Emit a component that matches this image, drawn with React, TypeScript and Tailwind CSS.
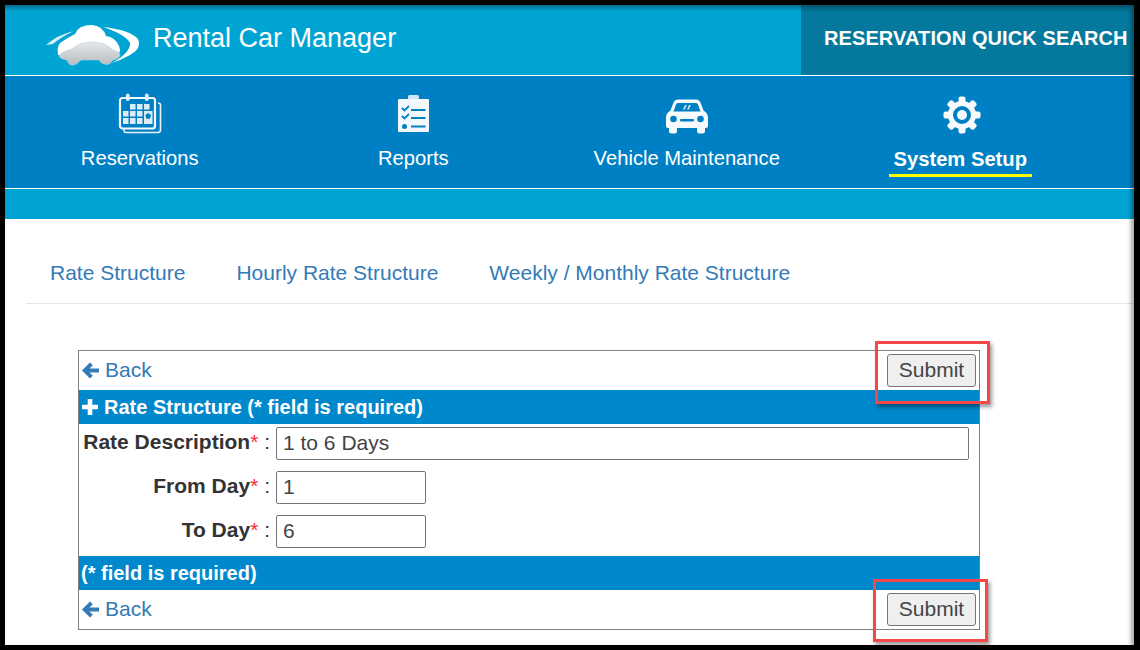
import React from 'react';

const CalendarIcon = () => (
  <svg width="44" height="41" viewBox="0 0 44 41" fill="none">
    <path d="M6 35V37.500Q6 39.500 8 39.500H40Q42.500 39.500 42.500 37V12Q42.500 10 40 10" stroke="#e6f3fa" strokeWidth="1.600" />
    <rect x="2" y="5" width="35" height="30.500" rx="2.500" stroke="#f2f8fc" strokeWidth="2.200" />
    <rect x="8" y="0.500" width="3.600" height="7.500" rx="1.800" fill="#e6f3fa" />
    <rect x="27" y="0.500" width="3.600" height="7.500" rx="1.800" fill="#e6f3fa" />
    <path fill="#dcecf6" d="M12 11h5.500v5.500H12zM19 11h5.500v5.500H19zM26 11h5.500v5.500H26zM5 18h5.500v5.500H5zM12 18h5.500v5.500H12zM19 18h5.500v5.500H19zM5 25h5.500v6H5zM12 25h5.500v6H12zM19 25h5.500v6H19zM26 18h8.500v13H26z" />
    <path fill="#0080c4" d="M30.200 20l2.900 2.100-1.100 3.700h-3.600l-1.100-3.700z" />
  </svg>
);

const ClipboardIcon = () => (
  <svg width="31" height="37" viewBox="0 0 31 37">
    <rect x="10" y="0" width="11" height="4.500" rx="1.500" fill="#cfe6f3" />
    <rect x="0" y="4" width="31" height="33" rx="1" fill="#f2f8fc" />
    <g stroke="#0080c4" fill="none" strokeWidth="2">
      <path d="M4 13l2.500 2.500L11 11M4 21l2.500 2.500L11 19" strokeWidth="1.800" />
      <path d="M13 15h14.500M13 23h14.500M13 31.500h14.500" />
    </g>
    <circle cx="6.500" cy="31.500" r="2.500" fill="#0080c4" />
  </svg>
);

const CarIcon = () => (
  <svg width="44" height="35" viewBox="0 0 44 35">
    <path fill="#f6fafd" fillRule="evenodd" d="M13 0.500h18q3 0 4.500 3l3 8q4.500 2.500 4.500 7v8.500q0 2-2 2h-1v3q0 2.500-2.500 2.500h-3q-2.500 0-2.500-2.500V29H12v3q0 2.500-2.500 2.500h-3Q4 34.500 4 32v-3H3q-2 0-2-2v-8.500q0-4.500 4.500-7l3-8q1.500-3 4.500-3zM13 4q-1.500 0-2 1.500L8.500 12.500h27L33 5.500Q32.500 4 31 4z" />
    <path fill="#cfe6f3" d="M20 6h1.800l-2 4.500H18zM24 6h1.800l-2 4.500H22z" />
    <circle cx="8.500" cy="20" r="3.300" fill="#0080c4" />
    <circle cx="35.500" cy="20" r="3.300" fill="#0080c4" />
    <rect x="15" y="20" width="14" height="2.500" rx="1" fill="#0080c4" />
  </svg>
);

const GearIcon = () => (
  <svg width="38" height="38" viewBox="0 0 38 38">
    <g fill="#f6fafd">
      {[0, 45, 90, 135, 180, 225, 270, 315].map((a) => (
        <rect key={a} x="15.500" y="0.500" width="7" height="9" rx="2" transform={`rotate(${a} 19 19)`} />
      ))}
    </g>
    <circle cx="19" cy="19" r="11.500" fill="none" stroke="#f6fafd" strokeWidth="5" />
    <circle cx="19" cy="19" r="5" fill="#f6fafd" />
  </svg>
);

const Logo = () => (
  <svg width="96" height="42" viewBox="0 0 96 42">
    <defs>
      <linearGradient id="carBody" x1="0" y1="0" x2="0" y2="1">
        <stop offset="0" stopColor="#e6e8e9" />
        <stop offset="1" stopColor="#b8bcbe" />
      </linearGradient>
    </defs>
    <path fill="#d8eff7" d="M1 21Q12 11 29 7Q16 13 8 20z" />
    <path fill="#ffffff" d="M58 3Q85 6 93 15Q97 24 85 31Q76 36 67 39Q86 28 85 19Q80 10 58 3z" />
    <path fill="#ffffff" d="M13 31Q11 20 18 17Q24 13 30 10Q33 1 47 1Q58 2 61 12Q70 13 74 22Q76 27 74 29L50 32z" />
    <path fill="url(#carBody)" stroke="#9fd3e6" strokeWidth="0.600" d="M14 32Q16 28 27 25Q35 18 47 18Q60 18 68 26Q75 28 75 31Q74 35 68 36Q64 42 60 40Q57 41 54 36H36Q31 42 26 41Q23 40 22 36Q15 35 14 32z" />
  </svg>
);

const navItems = [
  { label: 'Reservations', icon: <CalendarIcon />, pad: 'pb-[0px] ml-[1px]' },
  { label: 'Reports', icon: <ClipboardIcon />, pad: 'pb-[2px]' },
  { label: 'Vehicle Maintenance', icon: <CarIcon />, pad: 'pb-[0px]' },
];

const Back = () => (
  <a className="flex items-center gap-[6px] pb-[1px] text-[21px] leading-[24px] text-[#337ab7]">
    <svg width="17" height="17" viewBox="0 0 17 17" fill="currentColor">
      <path d="M0 8.500L8 0.500L10.800 3.300L7.500 6.400H17V10.600H7.500L10.800 13.700L8 16.500z" />
    </svg>
    Back
  </a>
);

const SubmitButton = () => (
  <button className="w-[89px] h-[33px] pb-[2px] border border-[#767676] rounded-[3px] bg-[#efefef] text-[21px] leading-[24px] text-[#444]">
    Submit
  </button>
);

const Field = ({ label, value, wide }: { label: string; value: string; wide?: boolean }) => (
  <div className="flex items-start">
    <label className="w-[197px] pr-[6px] pt-[1px] text-right text-[21px] leading-[28px] text-[#333] whitespace-nowrap">
      <b>{label}</b>
      <span className="text-red-500">*</span> :
    </label>
    <input
      readOnly
      value={value}
      className={`h-[33px] border border-[#767676] rounded-[2px] px-[6px] pb-[2px] text-[21px] text-[#444] ${wide ? 'w-[693px]' : 'w-[150px]'}`}
    />
  </div>
);

export default function App() {
  return (
    <div className="relative w-[1140px] h-[650px] overflow-hidden bg-black pt-[5px] pl-[5px] pr-[6px] pb-[5px] font-['Liberation_Sans',Arial,sans-serif]">
      <div className="h-full bg-white flex flex-col">
        <header className="h-[70px] flex bg-[#00a4d3] text-white">
          <div className="flex-1 flex items-start pl-[40px] pt-[19px] gap-[12px]">
            <Logo />
            <span className="text-[27px] leading-[38px] -mt-[5px]">Rental Car Manager</span>
          </div>
          <div className="w-[333px] pl-[23px] pt-[21px] bg-[#04799d] text-[20px] leading-[24px] tracking-[0.1px] font-bold whitespace-nowrap">
            RESERVATION QUICK SEARCH
          </div>
        </header>

        <nav className="h-[114px] border-y border-white bg-[#0080c4] text-white">
          <div className="w-[1094px] -ml-[2px] grid grid-cols-4">
            {navItems.map((item) => (
              <div key={item.label} className="flex flex-col items-center">
                <div className={`h-[58px] flex items-end ${item.pad}`}>{item.icon}</div>
                <span className="text-[20.2px] leading-[30px] mt-[9px]">{item.label}</span>
              </div>
            ))}
            <div className="flex flex-col items-center">
              <div className="h-[58px] flex items-end ml-[3px]"><GearIcon /></div>
              <span className="mt-[10px] w-[143px] h-[33px] text-center border-b-[3px] border-[#ffff00] text-[20.2px] leading-[30px] font-bold">
                System Setup
              </span>
            </div>
          </div>
        </nav>

        <div className="h-[30px] bg-[#00a4d3]" />

        <div className="ml-[21px] h-[85px] pl-[24px] pt-[39px] flex gap-[51px] border-b border-[#e5e5e5] text-[21px] leading-[30px] text-[#337ab7]">
          <a>Rate Structure</a>
          <a>Hourly Rate Structure</a>
          <a>Weekly / Monthly Rate Structure</a>
        </div>

        <section className="relative ml-[73px] mt-[46px] w-[902px] h-[280px] border border-[#808080] flex flex-col">
          <div className="h-[39px] flex items-center justify-between pl-[3px] pr-[3px]">
            <Back />
            <SubmitButton />
          </div>
          <div className="h-[34px] bg-[#0088cc] pl-[3px] flex items-center gap-[6px] text-white text-[20px] font-bold">
            <svg width="16" height="16" viewBox="0 0 16 16" fill="currentColor">
              <path d="M5.700 0h4.600v5.700H16v4.600h-5.700V16H5.700v-5.700H0V5.700h5.700z" />
            </svg>
            Rate Structure (* field is required)
          </div>
          <div className="h-[132px] pt-[3px] flex flex-col gap-[11px]">
            <Field label="Rate Description" value="1 to 6 Days" wide />
            <Field label="From Day" value="1" />
            <Field label="To Day" value="6" />
          </div>
          <div className="h-[34px] bg-[#0088cc] pl-[2px] flex items-center text-white text-[20px] font-bold">
            (* field is required)
          </div>
          <div className="h-[39px] flex items-center justify-between pl-[3px] pr-[3px]">
            <Back />
            <SubmitButton />
          </div>
          <div className="absolute left-[796px] -top-[10px] w-[115px] h-[63px] border-[3px] border-[#f44848] shadow-[2px_3px_4px_rgba(0,0,0,0.4)]" />
          <div className="absolute left-[794px] top-[228px] w-[115px] h-[63px] border-[3px] border-[#f44848] shadow-[2px_3px_4px_rgba(0,0,0,0.4)]" />
        </section>
      </div>
      <div className="absolute left-[5px] top-[5px] w-[1129px] h-[640px] pointer-events-none shadow-[inset_-3px_3px_4px_rgba(0,0,0,0.35)]" />
    </div>
  );
}
